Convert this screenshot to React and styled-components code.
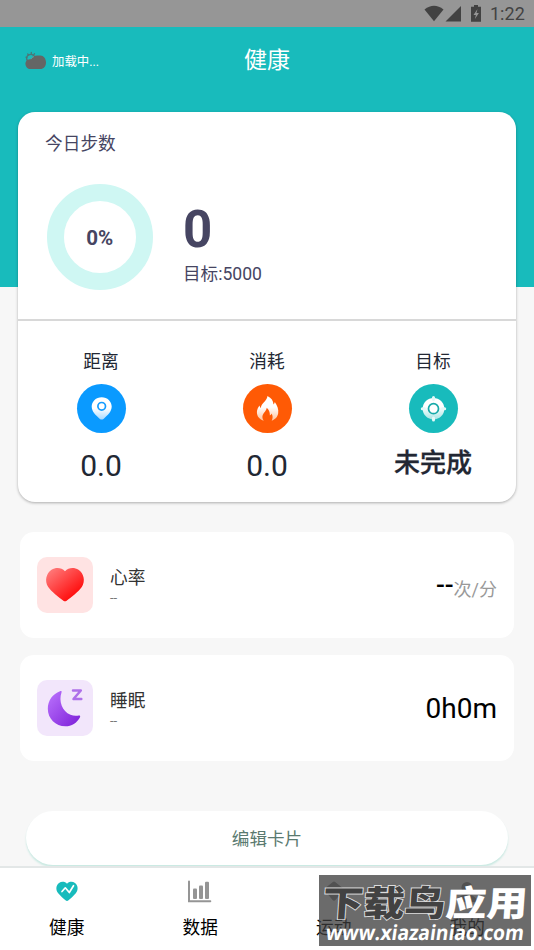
import React from 'react';
import styled, { createGlobalStyle } from 'styled-components';

const GlobalStyle = createGlobalStyle`
  * {
    box-sizing: border-box;
  }

  body {
    margin: 0;
    background: #f7f7f7;
    font-family: Roboto, 'Noto Sans CJK SC', sans-serif;
  }
`;

const Screen = styled.div`
  position: relative;
  display: flex;
  flex-direction: column;
  width: 534px;
  height: 950px;
  overflow: hidden;
  background: #f7f7f7;
`;

const StatusBar = styled.div`
  display: flex;
  flex: none;
  align-items: center;
  justify-content: flex-end;
  height: 27px;
  padding-right: 9px;
  background: #969696;
  color: #424242;
`;

const Clock = styled.span`
  margin-left: 8px;
  font-size: 18px;
  line-height: 27px;
  letter-spacing: 0.1px;
`;

const Header = styled.header`
  display: grid;
  flex: none;
  grid-template-columns: 1fr auto 1fr;
  align-items: start;
  height: 260px;
  padding: 16px 24px 0;
  background: #18bbbc;
  color: #fff;
`;

const Weather = styled.div`
  display: flex;
  align-items: center;
  gap: 5px;
  height: 35px;
  font-size: 12.4px;
`;

const Title = styled.h1`
  margin: 0;
  font-size: 23px;
  font-weight: 400;
  line-height: 36px;
`;

const StepCard = styled.section`
  flex: none;
  height: 390px;
  margin: -175px 18px 0;
  border-radius: 17px;
  background: #fff;
  box-shadow: 0 1px 3px rgba(0, 0, 0, 0.3);
`;

const StepSummary = styled.div`
  height: 209px;
  padding: 19px 27px 0;
  border-bottom: 2px solid #d8d8d8;
  color: #464562;
`;

const CardTitle = styled.h2`
  margin: 0;
  font-size: 17.7px;
  font-weight: 400;
  line-height: 26px;
`;

const StepRow = styled.div`
  display: flex;
  gap: 30px;
  margin: 27px 0 0 2px;
`;

const Ring = styled.div`
  display: flex;
  align-items: center;
  justify-content: center;
  width: 106px;
  height: 106px;
  border: 17px solid #cff7f3;
  border-radius: 50%;
  padding-top: 2px;
  padding-right: 1px;
  font-size: 21px;
  font-weight: 700;
`;

const RingValue = styled.span`
  transform: scaleX(0.98);
`;

const StepCount = styled.div`
  margin-top: 16px;
  font-size: 51px;
  font-weight: 700;
  line-height: 60px;
`;

const StepGoal = styled.div`
  font-size: 17.6px;
  line-height: 28px;
`;

const Stats = styled.div`
  display: grid;
  grid-template-columns: repeat(3, 1fr);
`;

const Stat = styled.div`
  display: flex;
  flex-direction: column;
  align-items: center;
  padding-top: 28px;
  color: #222733;
`;

const StatLabel = styled.span`
  font-size: 17.7px;
  line-height: 26px;
`;

const StatIcon = styled.div`
  display: flex;
  width: 49px;
  height: 49px;
  margin-top: 9px;
  border-radius: 50%;
  background: ${(props) => props.$color};
`;

const StatValue = styled.span`
  margin-top: ${(props) => (props.$bold ? '10px' : '13px')};
  font-size: ${(props) => (props.$bold ? '26px' : '30px')};
  font-weight: ${(props) => (props.$bold ? 500 : 400)};
  line-height: 40px;
  -webkit-text-stroke: ${(props) => (props.$bold ? '0.3px #222733' : '0')};
`;

const MetricCard = styled.section`
  display: flex;
  flex: none;
  align-items: center;
  height: 106px;
  margin: ${(props) => props.$top}px 20px 0;
  padding: 0 17px;
  border-radius: 14px;
  background: #fff;
`;

const MetricIcon = styled.div`
  display: flex;
  width: 56px;
  height: 56px;
  border-radius: 10px;
  background: ${(props) => props.$color};
`;

const MetricText = styled.div`
  flex: 1;
  margin-left: 17px;
  color: #333;
`;

const MetricName = styled.div`
  font-size: 17.7px;
  line-height: 26px;
`;

const MetricTime = styled.div`
  color: #777;
  font-size: 13px;
  line-height: 13px;
`;

const MetricValue = styled.div`
  padding-top: 3px;
  color: #000;
  font-size: 28px;
  line-height: 40px;
`;

const Dashes = styled.span`
  font-size: 26px;
  font-weight: 500;
`;

const Unit = styled.span`
  position: relative;
  top: 2px;
  color: #999;
  font-size: 18px;
`;

const EditButton = styled.button`
  flex: none;
  height: 54px;
  margin: 50px 26px 1.5px;
  padding: 0 0 1px;
  border: 0;
  border-radius: 27px;
  background: #fff;
  box-shadow: 0 2px 2px #c9e9e2;
  color: #5a7a70;
  font-family: inherit;
  font-size: 17.6px;
`;

const TabBar = styled.nav`
  display: grid;
  flex: 1;
  grid-template-columns: repeat(4, 1fr);
  z-index: 1;
  border-top: 2px solid #e3e7e7;
  background: #fff;
`;

const Tab = styled.div`
  display: flex;
  flex-direction: column;
  align-items: center;
  padding-top: 12px;
  color: #000;
  font-size: 17.7px;
  line-height: 26px;
`;

const TabIcon = styled.svg`
  width: 26px;
  height: 24px;
  margin-bottom: 11px;
`;

const Watermark = styled.div`
  position: absolute;
  z-index: 2;
  top: 875px;
  left: 319px;
  width: 212px;
  height: 71px;
  background: rgba(60, 60, 60, 0.755);
  color: #fff;
  white-space: nowrap;
`;

const WatermarkName = styled.div`
  height: 46px;
  padding: 3px 0 0 4px;
  font-family: 'Noto Sans CJK SC', sans-serif;
  font-size: 41px;
  font-weight: 900;
  line-height: 46px;
  transform: skewX(-4deg) scaleY(0.86);
`;

const Outlined = styled.span`
  color: #424242;
  -webkit-text-stroke: 2px #dcdcdc;
  paint-order: stroke fill;
`;

const WatermarkUrl = styled.div`
  width: max-content;
  padding-left: 7px;
  font-family: 'Open Sans', sans-serif;
  font-size: 19.2px;
  font-weight: 700;
  line-height: 22px;
  transform: skewX(-8deg) scaleY(1.08);
`;

const WeatherIcon = () => (
  <svg width="23" height="20" viewBox="0 0 23 20">
    <g stroke="#4b7778" strokeWidth="1.3" strokeLinecap="round">
      <path d="M2 6.2l1 .4M3.7 3l.8.8M7.3 1.4v1M10.5 2.8l-.7.8" />
    </g>
    <path d="M3.2 9.5a4 4 0 0 1 7-4.1" fill="none" stroke="#4b7778" strokeWidth="1.5" />
    <path
      d="M7 18A5.2 5.2 0 0 1 3.5 8.7C5.5 8.2 6.5 8.3 7.5 7.2 8.7 5.2 10.5 4.5 13 4.5h3.5c3 0 5.5 3 5.5 7 0 4-2.5 6.5-5.5 6.500z"
      fill="#646665"
    />
    <path d="M7 8.2c.8-1.5 1.7-2.2 3-2.600" fill="none" stroke="#5aa7a6" />
  </svg>
);

const StatusIcons = () => (
  <svg width="58" height="18" viewBox="0 0 58 18">
    <path d="M0.5 4.5Q10 -3 19.5 4.5L10 16.3z" fill="#424242" />
    <path d="M37 1v15.5H21.5z" fill="#424242" />
    <path d="M50 0h4v1.7h3v15H47v-15h3z" fill="#424242" />
    <path d="M53.5 4l-4 6h2.4l-1 4 4-6h-2.4z" fill="#969696" />
  </svg>
);

const DistanceIcon = () => (
  <svg width="49" height="49" viewBox="0 0 49 49">
    <defs>
      <linearGradient id="pin" x1="0" y1="0" x2="0" y2="1">
        <stop offset="0.5" stopColor="#fff" />
        <stop offset="1" stopColor="#a8d9ff" />
      </linearGradient>
    </defs>
    <path
      d="M24.7 13.2c-5.7 0-10 4.2-10 9.4 0 5 4 8.7 8.2 12.3 1.1.9 2.5.9 3.6 0 4.2-3.6 8.2-7.3 8.2-12.3 0-5.2-4.3-9.4-10-9.4z"
      fill="url(#pin)"
    />
    <circle cx="24.7" cy="22.3" r="3.8" fill="#fff" stroke="#149cff" strokeWidth="1.7" />
  </svg>
);

const FlameIcon = () => (
  <svg width="49" height="49" viewBox="0 0 49 49">
    <defs>
      <linearGradient id="flame" x1="0" y1="0" x2="0" y2="1">
        <stop offset="0.45" stopColor="#fff" />
        <stop offset="1" stopColor="#ffc19a" />
      </linearGradient>
    </defs>
    <path
      d="M24.5 12c4 2 5.8 4.8 6 8.5.8-.7 1.2-1.5 1.3-2.5 2.5 3.6 4 7.2 3.4 11.3-.5 3.7-3.2 6.4-6.5 7.4 1.3-2.7 1.2-5-.1-7.2-.4 1-.9 1.5-1.7 1.9 0-3.2-1-5.7-3.2-7.6-.1 3.4-4.3 5.6-4.3 9.2 0 1.6.6 2.7 1.5 3.7-4.3-1-7.1-4.2-7-8.6.1-2.8 1.2-4.8 2.6-6.6.2 1.3.7 2 1.4 2.5.2-4.9 5.8-6.5 6.6-12z"
      fill="url(#flame)"
    />
  </svg>
);

const TargetIcon = () => (
  <svg width="49" height="49" viewBox="0 0 49 49">
    <defs>
      <linearGradient id="target" x1="0" y1="0" x2="0" y2="1">
        <stop offset="0.4" stopColor="#fff" />
        <stop offset="1" stopColor="#a6e5e4" />
      </linearGradient>
    </defs>
    <circle cx="24.5" cy="24.7" r="10.8" fill="url(#target)" />
    <path
      d="M24.5 13.5v2M24.5 34v2M13.300 24.700h2M33.700 24.700h2"
      stroke="#e4f8f7"
      strokeWidth="3"
      strokeLinecap="round"
    />
    <circle cx="24.5" cy="24.7" r="5" fill="#fff" stroke="#18aaa9" strokeWidth="1.7" />
  </svg>
);

const HeartIcon = () => (
  <svg width="56" height="56" viewBox="0 0 56 56">
    <defs>
      <linearGradient id="heart" x1="0.1" y1="0.1" x2="0.75" y2="0.8">
        <stop offset="0" stopColor="#ff7676" />
        <stop offset="1" stopColor="#ff1010" />
      </linearGradient>
    </defs>
    <path
      d="M28 14.3C31.5 10.5 37 10 41.5 12.8c5.3 3.5 7.2 11.2 3.3 17.2C41.5 34.8 34 40.5 29.3 43.9q-1.3.9-2.6 0C22 40.5 14.5 34.8 11.2 30 7.3 24 9.2 16.3 14.5 12.8 19 10 24.5 10.5 28 14.3z"
      fill="url(#heart)"
    />
  </svg>
);

const MoonIcon = () => (
  <svg width="56" height="56" viewBox="0 0 56 56">
    <defs>
      <linearGradient id="moon" x1="0.1" y1="0.2" x2="0.85" y2="0.9">
        <stop offset="0" stopColor="#b267f8" />
        <stop offset="1" stopColor="#8429dc" />
      </linearGradient>
    </defs>
    <path
      d="M23 11.2c1.3-.5 2 .1 1.5 1.2C21.5 21 25 31 33.5 34.8c2.6 1.1 5 1.2 8.3.8 1.3-.1 1.7.6 1.2 1.6C40 43 34.5 46.3 28.5 46.3c-10 0-17.7-7.8-17.7-17.6 0-8.2 5-15 12.2-17.5z"
      fill="url(#moon)"
    />
    <path
      d="M36 10.5h7.8L36.5 19h7.8"
      fill="none"
      stroke="#ae70e9"
      strokeWidth="2.5"
      strokeLinecap="round"
      strokeLinejoin="round"
    />
  </svg>
);

const stats = [
  { label: '距离', value: '0.0', color: '#0a9aff', icon: <DistanceIcon /> },
  { label: '消耗', value: '0.0', color: '#ff5a05', icon: <FlameIcon /> },
  { label: '目标', value: '未完成', color: '#18bbbc', icon: <TargetIcon />, bold: true },
];

const tabs = [
  {
    label: '健康',
    icon: (
      <>
        <path
          d="M13 3.7c2-2.3 5.5-2.6 8-.7 3.3 2.7 3.4 7 .8 10.2-2 2.5-5 5-7.3 7.1q-1.5 1.2-3 0c-2.3-2.1-5.3-4.6-7.3-7.1C1.6 10 1.7 5.7 5 3c2.5-1.9 6-1.6 8 .7z"
          fill="#18bbbc"
        />
        <path
          d="M8 11.5l3.3-3.700 4 4.700L19.500 5.700"
          fill="none"
          stroke="#fff"
          strokeWidth="1.7"
          strokeLinecap="round"
          strokeLinejoin="round"
        />
      </>
    ),
  },
  {
    label: '数据',
    icon: (
      <g fill="#959595">
        <path d="M1 1.5q0-1 1-1t1 1v18.800h20.300q1 0 1 1t-1 1H1z" />
        <rect x="6" y="8.500" width="4" height="10.500" rx="1" />
        <rect x="12" y="5.500" width="4" height="13.500" rx="1" />
        <rect x="18" y="1.800" width="4" height="17.200" rx="1" />
      </g>
    ),
  },
  {
    label: '运动',
    icon: (
      <path
        d="M11.5 2.2q1.5-1.2 3 0l7.5 6q1.3 1.2 0 2.6L14.5 20q-1.5 1.6-3 0L4 10.8q-1.3-1.4 0-2.6z"
        fill="#959595"
      />
    ),
  },
  {
    label: '我的',
    icon: (
      <g fill="#959595">
        <circle cx="13" cy="7.5" r="5.5" />
        <path d="M3 22c0-10 20-10 20 0z" />
      </g>
    ),
  },
];

const App = () => (
  <>
    <GlobalStyle />
    <Screen>
      <StatusBar>
        <StatusIcons />
        <Clock>1:22</Clock>
      </StatusBar>
      <Header>
        <Weather>
          <WeatherIcon />
          加载中...
        </Weather>
        <Title>健康</Title>
      </Header>
      <StepCard>
        <StepSummary>
          <CardTitle>今日步数</CardTitle>
          <StepRow>
            <Ring>
              <RingValue>0%</RingValue>
            </Ring>
            <div>
              <StepCount>0</StepCount>
              <StepGoal>目标:5000</StepGoal>
            </div>
          </StepRow>
        </StepSummary>
        <Stats>
          {stats.map((stat) => (
            <Stat key={stat.label}>
              <StatLabel>{stat.label}</StatLabel>
              <StatIcon $color={stat.color}>{stat.icon}</StatIcon>
              <StatValue $bold={stat.bold}>{stat.value}</StatValue>
            </Stat>
          ))}
        </Stats>
      </StepCard>
      <MetricCard $top={29.5}>
        <MetricIcon $color="#ffe3e3">
          <HeartIcon />
        </MetricIcon>
        <MetricText>
          <MetricName>心率</MetricName>
          <MetricTime>--</MetricTime>
        </MetricText>
        <MetricValue>
          <Dashes>--</Dashes>
          <Unit>次/分</Unit>
        </MetricValue>
      </MetricCard>
      <MetricCard $top={17}>
        <MetricIcon $color="#f2e6fb">
          <MoonIcon />
        </MetricIcon>
        <MetricText>
          <MetricName>睡眠</MetricName>
          <MetricTime>--</MetricTime>
        </MetricText>
        <MetricValue>0h0m</MetricValue>
      </MetricCard>
      <EditButton>编辑卡片</EditButton>
      <TabBar>
        {tabs.map((tab) => (
          <Tab key={tab.label}>
            <TabIcon viewBox="0 0 26 24">{tab.icon}</TabIcon>
            {tab.label}
          </Tab>
        ))}
      </TabBar>
      <Watermark>
        <WatermarkName>
          <Outlined>下载鸟</Outlined>应用
        </WatermarkName>
        <WatermarkUrl>www.xiazainiao.com</WatermarkUrl>
      </Watermark>
    </Screen>
  </>
);

export default App;
